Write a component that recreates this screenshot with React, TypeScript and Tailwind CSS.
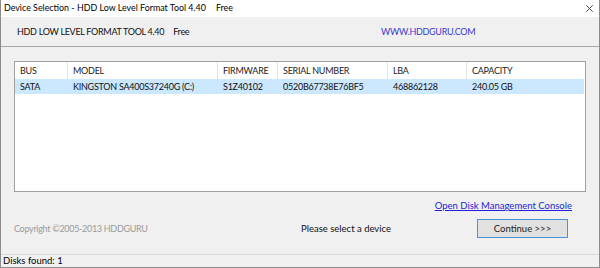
import React from "react";

const cols = [
  { key: "bus", label: "BUS", w: "w-[53px]" },
  { key: "model", label: "MODEL", w: "w-[150px]" },
  { key: "fw", label: "FIRMWARE", w: "w-[60px]" },
  { key: "sn", label: "SERIAL NUMBER", w: "w-[110px]" },
  { key: "lba", label: "LBA", w: "w-[79px]" },
  { key: "cap", label: "CAPACITY", w: "flex-1" },
];

const row: Record<string, string> = {
  bus: "SATA",
  model: "KINGSTON SA400S37240G (C:)",
  fw: "S1Z40102",
  sn: "0520B67738E76BF5",
  lba: "468862128",
  cap: "240.05 GB",
};

export default function App() {
  return (
    <div
      className="flex h-[268px] w-[600px] flex-col border-x border-b border-[#8c8c8c] bg-[#f0f0f0] text-[9.5px] text-[#1a1a1a]"
      style={{ fontFamily: 'Lato, "Open Sans", sans-serif' }}
    >
      {/* title bar */}
      <div className="flex h-[17px] items-center justify-between bg-white pl-[3px] pr-[6px]">
        <span className="text-[8.9px] leading-none text-black">
          Device Selection - HDD Low Level Format Tool 4.40
          <span className="ml-[10px]">Free</span>
        </span>
        <svg width="7" height="7" viewBox="0 0 7 7">
          <path d="M0.3 0.3 L6.7 6.7 M6.7 0.3 L0.3 6.7" stroke="#333" strokeWidth="0.9" />
        </svg>
      </div>

      {/* header band */}
      <div className="flex h-[30px] items-center border-b border-[#a8a8a8] pl-[16px] text-[9px] tracking-[-0.3px]">
        <span className="w-[364px] text-[#111]">
          HDD LOW LEVEL FORMAT TOOL 4.40
          <span className="ml-[9px]">Free</span>
        </span>
        <span className="text-[#3a3ad0]">WWW.HDDGURU.COM</span>
      </div>

      {/* device list */}
      <div className="mx-[13px] mt-[14px] h-[131px] border border-[#a0a0a0] bg-white text-[9px] tracking-[-0.25px]">
        <div className="flex h-[17px] items-center">
          {cols.map((c) => (
            <div
              key={c.key}
              className={`${c.w} flex h-full items-center whitespace-nowrap border-r border-[#e5e5e5] pl-[5px] text-[#222] last:border-r-0`}
            >
              {c.label}
            </div>
          ))}
        </div>
        <div className="mr-px flex h-[15px] items-center bg-[#cce8ff]">
          {cols.map((c) => (
            <div key={c.key} className={`${c.w} whitespace-nowrap pl-[5px] text-[#111]`}>
              {row[c.key]}
            </div>
          ))}
        </div>
      </div>

      {/* footer */}
      <div className="flex justify-end pr-[27px] pt-[7px]">
        <span className="text-[#1f1fd8] underline">Open Disk Management Console</span>
      </div>
      <div className="mt-[6px] flex items-center pl-[13px] pr-[31px]">
        <span className="w-[287px] text-[9px] tracking-[-0.3px] text-[#9a9a9a]">
          Copyright ©2005-2013 HDDGURU
        </span>
        <span className="flex-1 text-[#111]">Please select a device</span>
        <button className="h-[19px] w-[91px] border border-[#4a92dc] bg-[#e1e1e1] text-[#222]">
          Continue &gt;&gt;&gt;
        </button>
      </div>

      {/* status bar */}
      <div className="mt-auto flex h-[13px] items-center border-t border-[#dadada] pl-[2px] text-black">
        Disks found: 1
      </div>
    </div>
  );
}
